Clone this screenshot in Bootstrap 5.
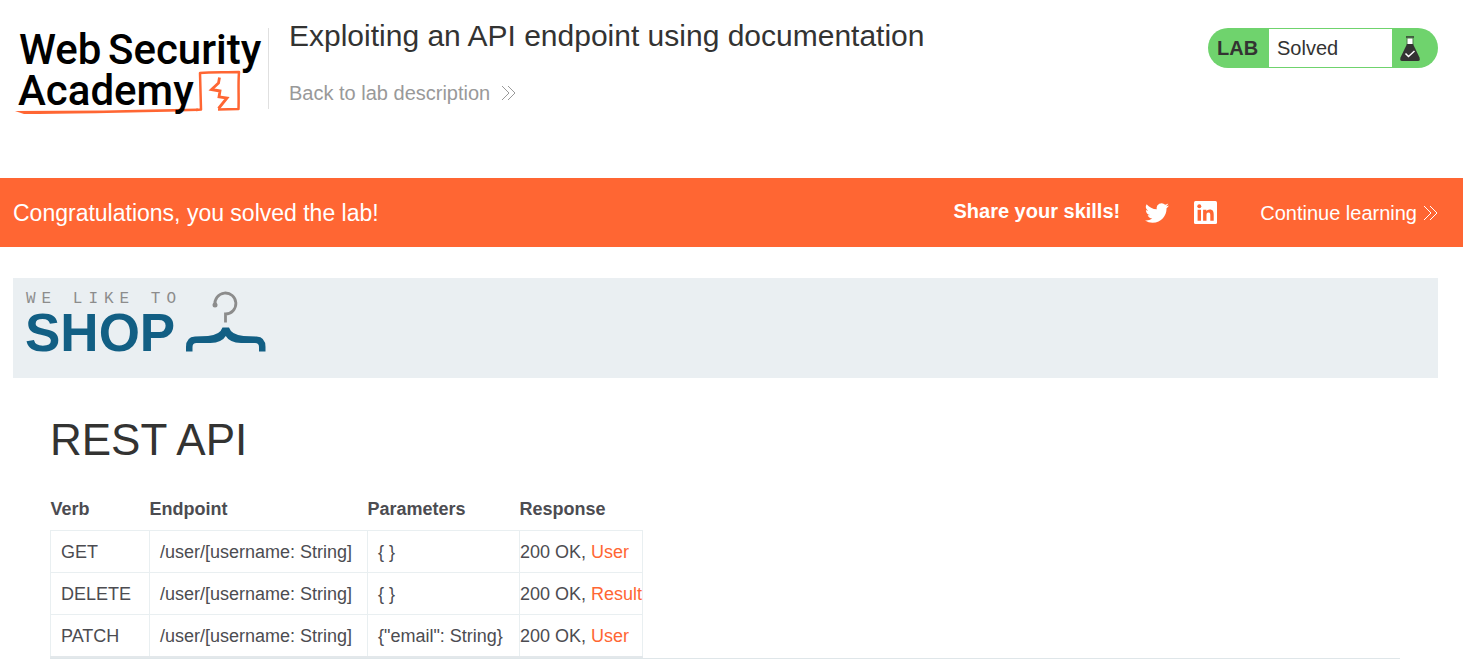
<!DOCTYPE html>
<html lang="en">
<head>
<meta charset="utf-8">
<meta name="viewport" content="width=device-width, initial-scale=1">
<title>Exploiting an API endpoint using documentation</title>
<link href="https://cdn.jsdelivr.net/npm/bootstrap@5.3.0/dist/css/bootstrap.min.css" rel="stylesheet">
<style>
  body { font-family: "Liberation Sans", Arial, sans-serif; color: #333332; font-size: 20px; line-height: 24px; }
  a { text-decoration: none; }
  .lab-header { min-height: 178px; padding: 16px 25px 0 13px; }
  .logo { width: 255px; height: 104px; flex: none; }
  .lab-title { border-left: 1px solid #e0e0e0; min-height: 81px; margin-top: 12px; padding-left: 20px; }
  .lab-title h1 { font-size: 30px; line-height: 36px; margin: -10px 0 27px; }
  .back-link { gap: 11px; }
  .back-link, .back-link:hover { color: #999; }
  .continue-link { gap: 6px; margin-left: 43px; }
  .chevrons { width: 15px; height: 16px; fill: none; stroke: currentColor; }
  .status { width: 230px; height: 40px; margin-top: 12px; border-radius: 20px; background: #6fd36d; flex: none; }
  .status strong { width: 61px; padding-left: 9px; }
  .status-text { height: 38px; padding-left: 8px; background: #fff; }
  .status-icon { width: 46px; padding-left: 7px; }
  .solved-bar { min-height: 69px; padding: 0 25px 0 13px; background: #f63; color: #fff; }
  .solved-bar a { color: #fff; }
  .solved-bar h2 { font-size: 23px; line-height: 28px; }
  .share-links { gap: 25px; }
  .main-area { padding: 31px 25px 0 13px; }
  .shop-banner { min-height: 100px; background: #eaeff2; }
  .api { padding: 35px 38px 0 37px; }
  .api h2 { font-size: 44px; line-height: 54px; margin-bottom: 27px; }
  .api-table { font-size: 18px; line-height: 21px; color: #4c4c51; white-space: nowrap; border-bottom: 2px solid #e3e8eb; }
  .api-table th { padding: 5px 0 10px; height: 36px; }
  .api-table td { border: 1px solid #e9eff1; padding: 11px 10px 9px; height: 42px; }
  .api-table td:last-child { padding-left: 0; padding-right: 0; }
  .api-table a { color: #f63; }
  .col-verb { width: 99px; } .col-endpoint { width: 218px; } .col-params { width: 152px; } .col-response { width: 120px; }
  .api hr { margin: 0; border-color: #dfe6e9; opacity: 1; }
</style>
</head>
<body>
<header class="lab-header d-flex align-items-start">
  <svg class="logo" viewBox="13 16 255 104" role="img" aria-label="Web Security Academy">
    <path d="M196 110 L201 109.500 L200 73 C212 71.500 226 72.500 239 72 C238 84 239 96 238.500 109 L218 109.500" fill="none" stroke="#f63" stroke-width="2.500" stroke-linejoin="round"/>
    <path d="M15 111 Q100 111 198 108.500 L198 111 Q80 114 24 114Z" fill="#f63"/>
    <path d="M219.500 77.500 L218.500 83 L211.500 89.500 L220 91 L219 96.800 L227 98 L218.500 108.500" fill="none" stroke="#f63" stroke-width="2.800"/>
    <g font-family="Roboto, sans-serif" font-weight="500" font-size="42" fill="#000">
      <text x="19" y="64">Web</text><text x="108" y="64">Security</text><text x="18" y="105">Academy</text>
    </g>
  </svg>
  <div class="lab-title flex-grow-1">
    <h1 class="fw-normal">Exploiting an API endpoint using documentation</h1>
    <a class="back-link d-inline-flex align-items-center" href="#">Back to lab description <svg class="chevrons" viewBox="0 0 15 16"><path d="M1 1l7 7-7 7M7 1l7 7-7 7"/></svg></a>
  </div>
  <div class="status d-flex align-items-center">
    <strong>LAB</strong>
    <span class="status-text flex-grow-1 d-flex align-items-center">Solved</span>
    <span class="status-icon d-flex"><svg width="22" height="28" viewBox="0 0 22 28"><path d="M7 3h8" stroke="#333332" stroke-width="1.500"/><path d="M8 4h6v7H8z" fill="#fff" stroke="#4a7f49" stroke-width="1"/><path d="M8 10h6l6.500 13.500Q21.500 27 19 27H3Q.5 27 1.500 23.500z" fill="#333332"/><path d="M6.500 19.500l3 3 6-5.500" fill="none" stroke="#fff" stroke-width="1.500"/></svg></span>
  </div>
</header>
<section class="solved-bar d-flex align-items-center">
  <h2 class="fw-normal mb-0 me-auto">Congratulations, you solved the lab!</h2>
  <div class="share-links d-flex align-items-center">
    <strong class="pb-1">Share your skills!</strong>
    <a href="#" class="d-flex" aria-label="Twitter"><svg width="24" height="24" viewBox="0 0 24 24" fill="#fff"><path d="M23.950 4.570a10 10 0 01-2.820.770 4.960 4.960 0 002.160-2.720c-.95.550-2 .950-3.120 1.180a4.920 4.920 0 00-8.380 4.480C7.690 8.090 4.070 6.130 1.640 3.160a4.920 4.920 0 001.520 6.570 4.900 4.900 0 01-2.230-.61v.060c0 2.380 1.700 4.360 3.950 4.820a5 5 0 01-2.220.080 4.940 4.940 0 004.600 3.420A9.870 9.870 0 010 19.540a13.990 13.990 0 007.550 2.210c9.050 0 13.990-7.500 13.990-13.980 0-.21 0-.42-.010-.63a9.940 9.940 0 002.420-2.570z"/></svg></a>
    <a href="#" class="d-flex" aria-label="LinkedIn"><svg width="23" height="23" viewBox="0 0 23 23"><rect width="23" height="23" rx="1.500" fill="#fff"/><g fill="#f63"><circle cx="5.300" cy="5.200" r="2"/><path d="M3.600 8.700H7v11H3.600zM9.100 8.700h3.300v1.500c.6-1.100 1.800-1.800 3.300-1.800 3.400 0 4 2.200 4 5.200v6.100h-3.400v-5.400c0-1.300 0-2.900-1.800-2.900s-2 1.400-2 2.800v5.500H9.100z"/></g></svg></a>
  </div>
  <a class="continue-link d-inline-flex align-items-center" href="#">Continue learning <svg class="chevrons" viewBox="0 0 15 16"><path d="M1 1l7 7-7 7M7 1l7 7-7 7"/></svg></a>
</section>
<main class="main-area">
  <div class="shop-banner">
    <svg class="d-block" width="260" height="100" viewBox="13 278 260 100" role="img" aria-label="We like to shop">
      <text x="26" y="303" font-family="Liberation Mono, monospace" font-size="16" letter-spacing="6" fill="#8c8c8c">WE LIKE TO</text>
      <text x="25" y="351" font-family="Liberation Sans, Arial, sans-serif" font-weight="700" font-size="53" fill="#125f84">SHOP</text>
      <path d="M215 305 A10.500 10.500 0 1 1 225.500 314 V322.500" fill="none" stroke="#8c8c8c" stroke-width="2.800"/><circle cx="215" cy="305" r="2.500" fill="#8c8c8c"/>
      <path d="M186 351.500V347Q186 337 195 336.500L208 336Q220 335 222.500 327.500H229Q231.500 335 243.500 336L256.500 336.500Q265.500 337 265.500 347V351.500H259V347Q259 343 255 343H241Q229.500 342.500 225.750 336Q222 342.500 210.500 343H196.500Q192.500 343 192.500 347V351.500Z" fill="#125f84"/>
    </svg>
  </div>
  <section class="api">
    <h2 class="fw-normal">REST API</h2>
    <table class="api-table">
      <colgroup><col class="col-verb"><col class="col-endpoint"><col class="col-params"><col class="col-response"></colgroup>
      <thead><tr><th>Verb</th><th>Endpoint</th><th>Parameters</th><th>Response</th></tr></thead>
      <tbody>
        <tr><td>GET</td><td>/user/[username: String]</td><td>{ }</td><td>200 OK, <a href="#">User</a></td></tr>
        <tr><td>DELETE</td><td>/user/[username: String]</td><td>{ }</td><td>200 OK, <a href="#">Result</a></td></tr>
        <tr><td>PATCH</td><td>/user/[username: String]</td><td>{"email": String}</td><td>200 OK, <a href="#">User</a></td></tr>
      </tbody>
    </table>
    <hr>
  </section>
</main>
<script src="https://cdn.jsdelivr.net/npm/bootstrap@5.3.0/dist/js/bootstrap.bundle.min.js"></script>
</body>
</html>
